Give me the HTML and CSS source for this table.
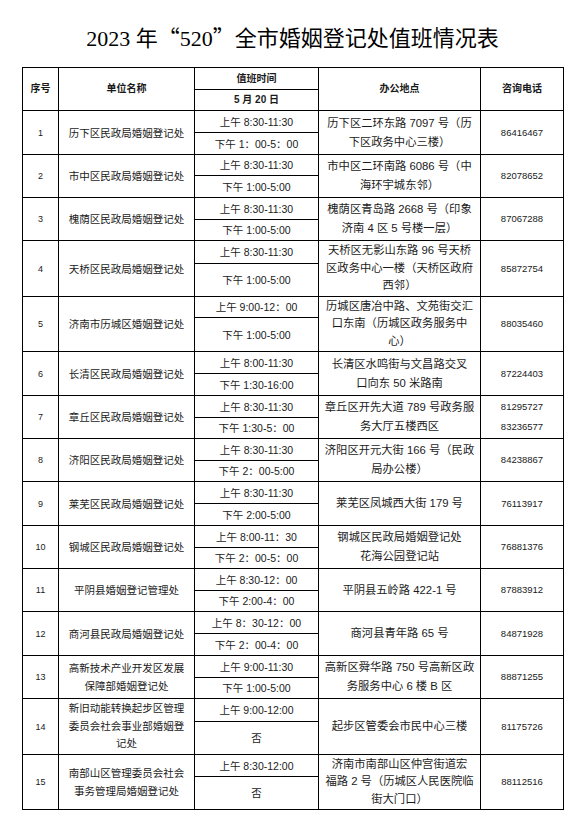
FILE: index.html
```html
<!DOCTYPE html>
<html lang="zh-CN">
<head>
<meta charset="utf-8">
<title>2023年“520”全市婚姻登记处值班情况表</title>
<link rel="stylesheet" href="styles.css">
</head>
<body>
<div class="page">
  <h1 class="title">2023 年<span class="q">“</span>520<span class="q">”</span>全市婚姻登记处值班情况表</h1>
  <table class="duty">
    <colgroup>
      <col class="c-no"><col class="c-unit"><col class="c-time"><col class="c-addr"><col class="c-tel">
    </colgroup>
    <thead>
      <tr class="h22">
        <th rowspan="2">序号</th>
        <th rowspan="2">单位名称</th>
        <th>值班时间</th>
        <th rowspan="2">办公地点</th>
        <th rowspan="2">咨询电话</th>
      </tr>
      <tr class="h21"><th>5 月 20 日</th></tr>
    </thead>
    <tbody>
      <tr class="h22">
        <td class="no" rowspan="2">1</td>
        <td class="unit" rowspan="2">历下区民政局婚姻登记处</td>
        <td class="time">上午 8:30-11:30</td>
        <td class="addr" rowspan="2">历下区二环东路 7097 号（历<br>下区政务中心三楼）</td>
        <td class="tel" rowspan="2">86416467</td>
      </tr>
      <tr class="h22"><td class="time">下午 1：00-5：00</td></tr>

      <tr class="h21">
        <td class="no" rowspan="2">2</td>
        <td class="unit" rowspan="2">市中区民政局婚姻登记处</td>
        <td class="time">上午 8:30-11:30</td>
        <td class="addr" rowspan="2">市中区二环南路 6086 号（中<br>海环宇城东邻）</td>
        <td class="tel" rowspan="2">82078652</td>
      </tr>
      <tr class="h22"><td class="time">下午 1:00-5:00</td></tr>

      <tr class="h22">
        <td class="no" rowspan="2">3</td>
        <td class="unit" rowspan="2">槐荫区民政局婚姻登记处</td>
        <td class="time">上午 8:30-11:30</td>
        <td class="addr" rowspan="2">槐荫区青岛路 2668 号（印象<br>济南 4 区 5 号楼一层）</td>
        <td class="tel" rowspan="2">87067288</td>
      </tr>
      <tr class="h21"><td class="time">下午 1:00-5:00</td></tr>

      <tr class="h23">
        <td class="no" rowspan="2">4</td>
        <td class="unit" rowspan="2">天桥区民政局婚姻登记处</td>
        <td class="time">上午 8:30-11:30</td>
        <td class="addr l3" rowspan="2">天桥区无影山东路 96 号天桥<br>区政务中心一楼（天桥区政府<br>西邻）</td>
        <td class="tel" rowspan="2">85872754</td>
      </tr>
      <tr class="h33"><td class="time">下午 1:00-5:00</td></tr>

      <tr class="h21">
        <td class="no" rowspan="2">5</td>
        <td class="unit" rowspan="2">济南市历城区婚姻登记处</td>
        <td class="time">上午 9:00-12：00</td>
        <td class="addr l3" rowspan="2">历城区唐冶中路、文苑街交汇<br>口东南（历城区政务服务中<br>心）</td>
        <td class="tel" rowspan="2">88035460</td>
      </tr>
      <tr class="h34"><td class="time">下午 1:00-5:00</td></tr>

      <tr class="h22">
        <td class="no" rowspan="2">6</td>
        <td class="unit" rowspan="2">长清区民政局婚姻登记处</td>
        <td class="time">上午 8:00-11:30</td>
        <td class="addr" rowspan="2">长清区水鸣街与文昌路交叉<br>口向东 50 米路南</td>
        <td class="tel" rowspan="2">87224403</td>
      </tr>
      <tr class="h22"><td class="time">下午 1:30-16:00</td></tr>

      <tr class="h22">
        <td class="no" rowspan="2">7</td>
        <td class="unit" rowspan="2">章丘区民政局婚姻登记处</td>
        <td class="time">上午 8:30-11:30</td>
        <td class="addr" rowspan="2">章丘区开先大道 789 号政务服<br>务大厅五楼西区</td>
        <td class="tel two" rowspan="2">81295727<br>83236577</td>
      </tr>
      <tr class="h21"><td class="time">下午 1:30-5：00</td></tr>

      <tr class="h22">
        <td class="no" rowspan="2">8</td>
        <td class="unit" rowspan="2">济阳区民政局婚姻登记处</td>
        <td class="time">上午 8:30-11:30</td>
        <td class="addr" rowspan="2">济阳区开元大街 166 号（民政<br>局办公楼）</td>
        <td class="tel" rowspan="2">84238867</td>
      </tr>
      <tr class="h21"><td class="time">下午 2：00-5:00</td></tr>

      <tr class="h22">
        <td class="no" rowspan="2">9</td>
        <td class="unit" rowspan="2">莱芜区民政局婚姻登记处</td>
        <td class="time">上午 8:30-11:30</td>
        <td class="addr" rowspan="2">莱芜区凤城西大街 179 号</td>
        <td class="tel" rowspan="2">76113917</td>
      </tr>
      <tr class="h22"><td class="time">下午 2:00-5:00</td></tr>

      <tr class="h22">
        <td class="no" rowspan="2">10</td>
        <td class="unit" rowspan="2">钢城区民政局婚姻登记处</td>
        <td class="time">上午 8:00-11：30</td>
        <td class="addr" rowspan="2">钢城区民政局婚姻登记处<br>花海公园登记站</td>
        <td class="tel" rowspan="2">76881376</td>
      </tr>
      <tr class="h21"><td class="time">下午 2：00-5：00</td></tr>

      <tr class="h22">
        <td class="no" rowspan="2">11</td>
        <td class="unit" rowspan="2">平阴县婚姻登记管理处</td>
        <td class="time">上午 8:30-12：00</td>
        <td class="addr" rowspan="2">平阴县五岭路 422-1 号</td>
        <td class="tel" rowspan="2">87883912</td>
      </tr>
      <tr class="h21"><td class="time">下午 2:00-4：00</td></tr>

      <tr class="h22">
        <td class="no" rowspan="2">12</td>
        <td class="unit" rowspan="2">商河县民政局婚姻登记处</td>
        <td class="time">上午 8：30-12：00</td>
        <td class="addr" rowspan="2">商河县青年路 65 号</td>
        <td class="tel" rowspan="2">84871928</td>
      </tr>
      <tr class="h22"><td class="time">下午 2：00-4：00</td></tr>

      <tr class="h22">
        <td class="no" rowspan="2">13</td>
        <td class="unit" rowspan="2">高新技术产业开发区发展<br>保障部婚姻登记处</td>
        <td class="time">上午 9:00-11:30</td>
        <td class="addr" rowspan="2">高新区舜华路 750 号高新区政<br>务服务中心 6 楼 B 区</td>
        <td class="tel" rowspan="2">88871255</td>
      </tr>
      <tr class="h21"><td class="time">下午 1:00-5:00</td></tr>

      <tr class="h23">
        <td class="no" rowspan="2">14</td>
        <td class="unit l3" rowspan="2">新旧动能转换起步区管理<br>委员会社会事业部婚姻登<br>记处</td>
        <td class="time">上午 9:00-12:00</td>
        <td class="addr" rowspan="2">起步区管委会市民中心三楼</td>
        <td class="tel" rowspan="2">81175726</td>
      </tr>
      <tr class="h33"><td class="time">否</td></tr>

      <tr class="h22">
        <td class="no" rowspan="2">15</td>
        <td class="unit" rowspan="2">南部山区管理委员会社会<br>事务管理局婚姻登记处</td>
        <td class="time">上午 8:30-12:00</td>
        <td class="addr l3" rowspan="2">济南市南部山区仲宫街道宏<br>福路 2 号（历城区人民医院临<br>街大门口）</td>
        <td class="tel" rowspan="2">88112516</td>
      </tr>
      <tr class="h33"><td class="time">否</td></tr>
    </tbody>
  </table>
</div>
</body>
</html>
```

FILE: styles.css
```css
html, body {
  margin: 0;
  padding: 0;
  background: #ffffff;
}

.page {
  width: 541px;
  padding: 24px 0 0 22px;
  color: #1a1a1a;
  font-family: "Liberation Sans", "Noto Sans CJK SC", sans-serif;
}

.title {
  height: 29px;
  margin: 0 0 14px;
  overflow: visible;
  font-family: "Liberation Serif", "Noto Sans CJK SC", serif;
  font-size: 22px;
  font-weight: normal;
  line-height: 29px;
  text-align: center;
  color: #000;
  white-space: nowrap;
}

.title .q {
  font-family: "Noto Sans CJK SC", sans-serif;
  line-height: 0;
}

.duty {
  width: 541px;
  border-collapse: collapse;
  table-layout: fixed;
}

.c-no { width: 36px; }
.c-unit { width: 136px; }
.c-time { width: 124px; }
.c-addr { width: 162px; }
.c-tel { width: 83px; }

.duty th,
.duty td {
  border: 1.2px solid #000;
  padding: 0;
  text-align: center;
  vertical-align: middle;
  white-space: nowrap;
  overflow: hidden;
}

.duty th {
  font-family: "Liberation Sans", "Noto Sans CJK SC", sans-serif;
  font-size: 10px;
  font-weight: 700;
  line-height: 14px;
}

.h21 { height: 21px; }
.h22 { height: 22px; }
.h23 { height: 23px; }
.h33 { height: 33px; }
.h34 { height: 34px; }

.no {
  font-size: 9px;
  line-height: 12px;
}

.unit {
  font-size: 10.5px;
  line-height: 18px;
}

.time {
  font-size: 10.5px;
  line-height: 14px;
}

.addr {
  font-size: 11.3px;
  line-height: 19px;
}

.addr.l3,
.unit.l3 {
  line-height: 17.5px;
}

.tel {
  font-size: 9.5px;
  line-height: 12px;
}

.tel.two {
  line-height: 20px;
}
```
